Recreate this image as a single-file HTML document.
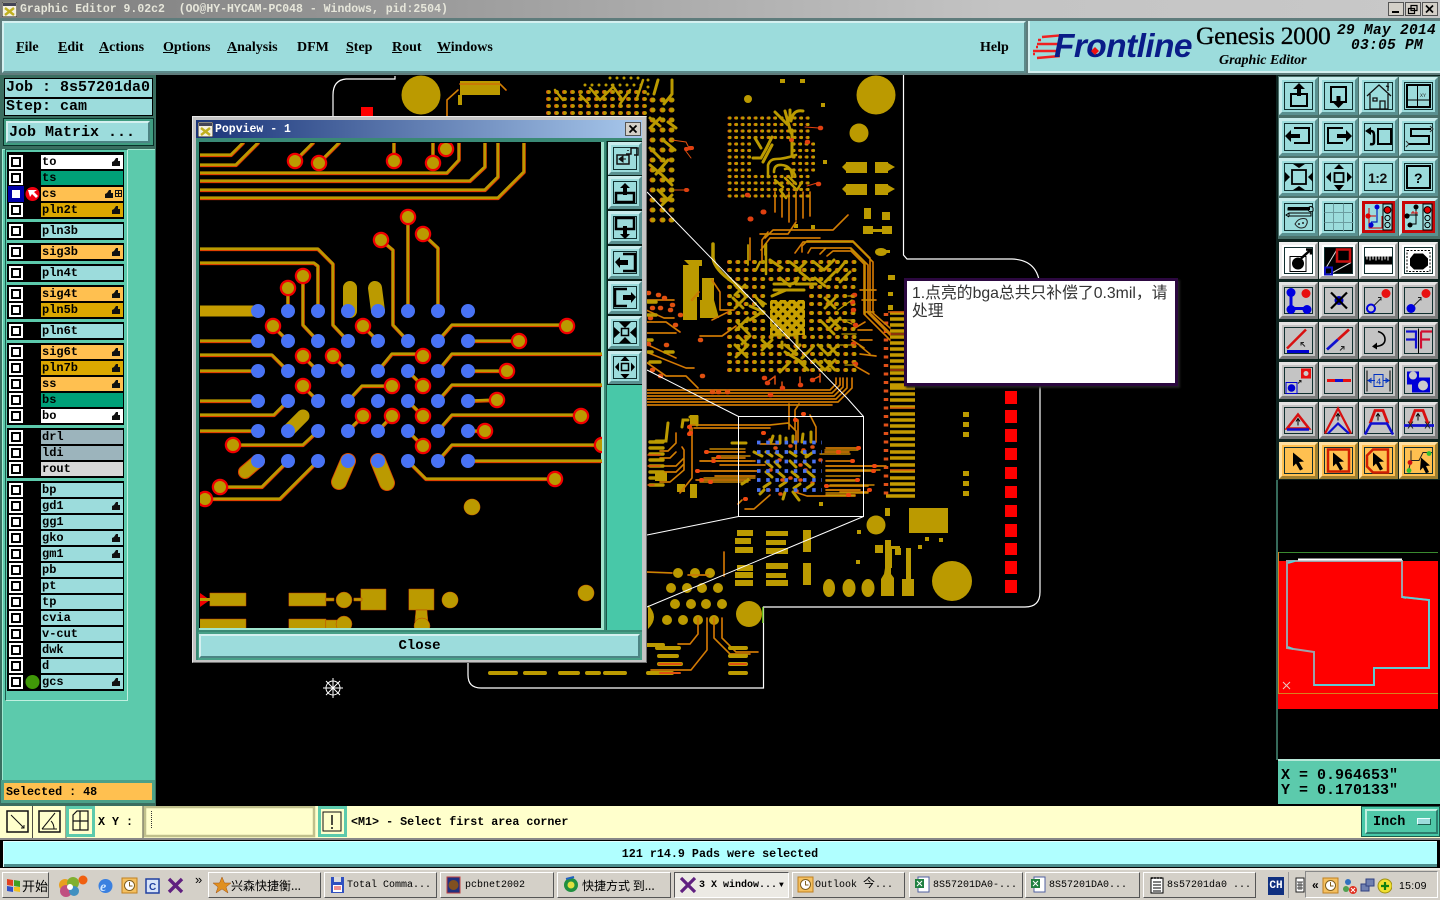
<!DOCTYPE html>
<html><head><meta charset="utf-8"><title>Graphic Editor</title>
<style>
html,body{margin:0;padding:0;width:1440px;height:900px;overflow:hidden;background:#000}
div,span,svg{position:absolute;box-sizing:border-box}
body{font-family:"Liberation Mono","Noto Sans CJK SC",monospace;color:#000}
.m{font:bold 14px "Liberation Serif",serif;top:40px}
u{text-decoration:underline}
.mono{font:bold 15px/18px "Liberation Mono",monospace;white-space:pre}
.lg{background:#000}
.l{left:41px;width:82px;height:14px;font:bold 12px/15px "Liberation Mono",monospace;padding-left:1px;background:#9cdcdc}
.w{background:#fff}.t{background:#00a078}.o{background:#ffc050}.y{background:#dca800}.s{background:#9cb4bc}.v{background:#d8d8d8}
.c{left:9px;width:14px;height:14px;background:#fff}
.c:after{content:"";position:absolute;left:2px;top:2px;width:10px;height:10px;border:2px solid #000;background:#fff;box-sizing:border-box}
.b{width:39px;height:38px;background:#9cdcdc;border:3px solid;border-color:#c8ecec #5a9090 #5a9090 #c8ecec}
.b i{position:absolute;left:2px;top:2px;right:2px;bottom:2px;border:1px solid #103030}
.g1{background:#c4c4c4;border-color:#e4e4e4 #7c7c7c #7c7c7c #e4e4e4}
.wh{background:#fff;border-color:#f0f0f0 #a0a0a0 #a0a0a0 #f0f0f0}
.or{background:#ffc050;border-color:#ffe0a0 #a08030 #a08030 #ffe0a0}
.b svg{left:-3px;top:-3px;width:39px;height:38px}
.pb{left:608px;width:34px;height:33px;background:#9cdcdc;border:3px solid;border-color:#c8ecec #5a9090 #5a9090 #c8ecec}
.pb i{position:absolute;left:2px;top:2px;right:2px;bottom:2px;border:1px solid #103030}
.pb svg{left:-3px;top:-3px;width:34px;height:33px}
.k{top:872px;height:26px;background:#d4d0c8;border:1px solid;border-color:#fff #555 #555 #fff;font:10px/26px "Liberation Mono","Noto Sans CJK SC",monospace;white-space:pre;overflow:hidden}
.k b{position:absolute;top:0;font-weight:normal}
.k svg{left:4px;top:3px;width:18px;height:18px}
.tb{top:877px;width:17px;height:17px}
svg .tr{fill:none;stroke-linejoin:round;stroke-linecap:round}
</style></head><body>

<!-- title bar -->
<div style="left:0;top:0;width:1440px;height:18px;background:linear-gradient(90deg,#7c7c7c,#c4c4c4 70%,#c8c8c8)"></div>
<svg style="left:2px;top:2px;width:15px;height:15px"><rect width="15" height="15" fill="#f4f0e0" stroke="#222"/><rect x="1" y="1" width="13" height="3" fill="#445"/><path d="M3 6l9 7M12 6l-9 7" stroke="#c0b020" stroke-width="2.400"/></svg>
<div style="left:20px;top:3px;font:bold 11.500px/14px 'Liberation Mono',monospace;color:#e6e6da;white-space:pre">Graphic Editor 9.02c2  (OO@HY-HYCAM-PC048 - Windows, pid:2504)</div>
<svg style="left:1388px;top:2px;width:50px;height:14px"><g fill="#d4d0c8" stroke="#555"><rect x=".5" y=".5" width="15" height="13"/><rect x="17.500" y=".5" width="15" height="13"/><rect x="34.500" y=".5" width="15" height="13"/></g><path d="M4 10h7" stroke="#000" stroke-width="2"/><path d="M23 3.500h6v5h-6zM20.500 6.500h6v5h-6z" fill="#d4d0c8" stroke="#000" stroke-width="1.200"/><path d="M38 3.500l7 7M45 3.500l-7 7" stroke="#000" stroke-width="1.700"/></svg>
<div style="left:0;top:18px;width:1440px;height:58px;background:#5f7c7c"></div>

<!-- menu bar -->
<div style="left:2px;top:21px;width:1024px;height:52px;background:#9cdcdc;border:2px solid;border-color:#d4f0f0 #5c8a8a #5c8a8a #d4f0f0"></div>
<span class="m" style="left:16px"><u>F</u>ile</span><span class="m" style="left:58px"><u>E</u>dit</span><span class="m" style="left:99px"><u>A</u>ctions</span><span class="m" style="left:163px"><u>O</u>ptions</span><span class="m" style="left:227px"><u>A</u>nalysis</span><span class="m" style="left:297px">DFM</span><span class="m" style="left:346px"><u>S</u>tep</span><span class="m" style="left:392px"><u>R</u>out</span><span class="m" style="left:437px"><u>W</u>indows</span><span class="m" style="left:980px">Help</span>

<!-- logo header -->
<div style="left:1028px;top:21px;width:412px;height:52px;background:#9cdcdc;border-left:2px solid #d4f0f0;border-bottom:2px solid #d4f0f0"></div>
<svg style="left:1030px;top:31px;width:30px;height:32px"><path d="M12 6l23-2M7 13h23M3 20h23M7 27l23-2M11 9l-3 0M8 16h-2M5 23h-2" stroke="#f02020" stroke-width="2.400"/></svg>
<div style="left:1054px;top:28px;font:italic bold 33.500px/38px 'Liberation Sans',sans-serif;color:#0a1c88;letter-spacing:-.6px;white-space:pre">Frontline</div>
<svg style="left:1089px;top:45px;width:12px;height:12px"><path d="M6 2l4 4-4 4-4-4z" fill="#f01010"/></svg>
<div style="left:1196px;top:21px;font:25.500px/30px 'Liberation Serif',serif;white-space:pre;-webkit-text-stroke:.3px #000;letter-spacing:-.3px">Genesis 2000</div>
<div style="left:1219px;top:53px;font:italic bold 14px/16px 'Liberation Serif',serif;white-space:pre">Graphic Editor</div>
<div style="left:1337px;top:24px;font:italic bold 14.500px/15px 'Liberation Mono',monospace;white-space:pre;letter-spacing:.300px">29 May 2014</div>
<div style="left:1351px;top:39px;font:italic bold 14.500px/15px 'Liberation Mono',monospace;white-space:pre;letter-spacing:.300px">03:05 PM</div>

<!-- main canvas -->
<div style="left:155px;top:75px;width:1123px;height:731px;background:#000"></div>
<svg style="left:0;top:0;width:1440px;height:806px" viewBox="0 0 1440 806">
<defs>
<pattern id="hx" width="6.400" height="6.400" patternUnits="userSpaceOnUse" patternTransform="rotate(45)"><rect width="6.400" height="6.400" fill="#c8a000"/><rect x="0" y="0" width="2.400" height="2.400" fill="#000"/></pattern>
<g id="mt">
<path d="M447 116V100L458 90M460 84H500M500 84l6 6"/>
<path d="M795 253l8-11h50l20 20v51l17 15M802 252v-6l5-5h46l17 17v55l20 20M808 253l3-5h40l17 17v48l22 22M820 254l6-6h24l15 15v52l25 25M827 256l6-5h18l13 13v50l26 26"/>
<path d="M647 390H830l6-6v-6M647 393H832l8-8v-7M647 396H834l9-9v-9M647 399H836l11-11v-10M647 402H838l14-14v-10M647 405H832"/>
<path d="M765 238l8-8h60l15-15M761 250l9-12h50M750 260v-22M762 262v-22l6-8"/>
<path d="M646 300h28M646 310l18 8h10M646 322h20l14 10M646 333h30M646 344l30 14M646 352l40 16h8M646 362l20 14h20l12 12"/>
<path d="M692 300l7-8M712 280l8 12v18h14M712 320l20-10M700 336h22l14-10"/>
<path d="M775 192v20M782 192v25M789 192v30M796 192v28M803 192v26M810 192v24M796 222l-8 12h-28"/>
<path d="M852 340l12 8M855 328l10-6M860 346l10 8"/>
<path d="M690 425H770l18-2 8 8v20M694 428H770M692 428v50l-12 15M789 404v25M795 430v-20l4-6M810 415l6 12v15M798 420v22M760 444h20"/>
<path d="M706 452H745M712 458H745M700 461H755M720 465H765M697 471H760M715 476H755M700 480H750M696 480H745M826 448h32M825 452h24M826 461h24M826 466h60M826 471H872M826 480H855M826 486H868M840 492h28M826 490H860M826 495H855"/>
<path d="M742 500l-4 4M770 495l-16 14H745M795 492l12 4h48"/>
<path d="M660 451H668l8-8v-10M660 458H670l6-6M660 466H676l8-8M660 472h16l8-8M660 482l10 0 14-12v-20l-2-3M690 428v5"/>
<path d="M647 572l25 1M688 575l20 0M724 552v24"/>
<path d="M698 618v16l-8 10h-12M707 618v32l-16 20h-40M714 618l0 20 16 16h20M722 618v20l14 14h22"/>
<path d="M860 290h16M862 300h14M864 312h10M858 330l14 0M860 340l12 0M860 354l16 2M855 366l14 8"/>
</g>
</defs>

<!-- board outline -->
<g fill="none" stroke="#fff" stroke-width="1.200">
<path d="M395 76v3H346Q333 80 333 95V118"/>
<path d="M468 660v15q0 13 13 13H763.500V607H1025Q1040 607 1040 592V290Q1040 260 1012 259H907L903.500 255V75"/>
</g>
<g fill="#bb9a00">
<circle cx="421" cy="95" r="19.500"/><circle cx="876" cy="95" r="19.500"/><circle cx="859" cy="133" r="9.500"/><circle cx="748" cy="99" r="4"/><circle cx="876" cy="525" r="9.500"/><circle cx="952" cy="581" r="20"/><circle cx="749" cy="614" r="13"/>
<rect x="909" y="508" width="39" height="25"/>
<rect x="460" y="81" width="40" height="14"/><rect x="458" y="95" width="4" height="10"/>
<rect x="846" y="162" width="21" height="11"/><rect x="875" y="162" width="13" height="11"/><rect x="846" y="184" width="21" height="11"/><rect x="875" y="184" width="13" height="11"/>
<path d="M846 163l-4 4 4 4zM888 163l7 4-7 4zM846 185l-4 4 4 4zM888 185l7 4-7 4z"/>
<rect x="863" y="226" width="10" height="8"/><rect x="882" y="226" width="10" height="8"/><rect x="872" y="229" width="12" height="3"/>
<rect x="864" y="208" width="7" height="11"/><rect x="882" y="212" width="8" height="8"/>
<ellipse cx="881" cy="252" rx="6" ry="4"/><rect x="884" y="250" width="6" height="3"/>
<rect x="683" y="265" width="16" height="32"/><rect x="683" y="296" width="14" height="24"/><rect x="702" y="278" width="12" height="40"/><path d="M684 260h18v6h-12z"/><path d="M700 300h14l5 18h-19z"/>
<ellipse cx="829" cy="588" rx="6" ry="9"/><ellipse cx="849" cy="588" rx="6.500" ry="9"/><ellipse cx="868" cy="588" rx="6.500" ry="9"/>
<path d="M886 562h5v12l3 4v18h-13v-17l3-5z"/><rect x="902" y="579" width="12" height="17"/><rect x="906" y="562" width="5" height="17"/>
<path d="M885 562h7v6h-7zM885 548h7v14h-7zM906 548h5v14h-5z"/>
<g id="cp"><circle cx="678" cy="573" r="5"/><circle cx="695" cy="573" r="5"/><circle cx="710" cy="573" r="5"/><circle cx="671" cy="588" r="5"/><circle cx="687" cy="588" r="5"/><circle cx="702" cy="588" r="5"/><circle cx="718" cy="588" r="5"/><circle cx="675" cy="604" r="5"/><circle cx="691" cy="604" r="5"/><circle cx="706" cy="604" r="5"/><circle cx="722" cy="604" r="5"/><circle cx="667" cy="620" r="5"/><circle cx="683" cy="620" r="5"/><circle cx="698" cy="620" r="5"/><circle cx="714" cy="620" r="5"/></g>
<path d="M648 605q12 12 0 24z"/>
<rect x="737" y="530" width="16" height="6"/><rect x="735" y="538" width="16" height="6"/><rect x="735" y="547" width="18" height="6"/><rect x="737" y="565" width="16" height="6"/><rect x="735" y="572" width="18" height="6"/><rect x="735" y="580" width="18" height="6"/>
<rect x="766" y="531" width="22" height="5"/><rect x="766" y="540" width="20" height="5"/><rect x="766" y="548" width="22" height="6"/><rect x="766" y="563" width="22" height="6"/><rect x="766" y="573" width="20" height="5"/><rect x="766" y="580" width="22" height="6"/>
<rect x="803" y="530" width="8" height="22"/><rect x="803" y="563" width="8" height="22"/>
<rect x="885" y="508" width="5" height="8"/><rect x="885" y="540" width="6" height="8"/><rect x="885" y="546" width="15" height="3"/><rect x="895" y="548" width="6" height="7"/><rect x="875" y="545" width="8" height="8"/>
<rect x="925" y="537" width="4" height="4"/><rect x="939" y="538" width="4" height="4"/><rect x="918" y="545" width="4" height="4"/>
<rect x="857" y="530" width="4" height="4"/><rect x="856" y="560" width="4" height="4"/>
<rect x="963" y="412" width="6" height="5"/><rect x="963" y="422" width="6" height="5"/><rect x="963" y="432" width="6" height="5"/><rect x="963" y="471" width="6" height="5"/><rect x="963" y="481" width="6" height="5"/><rect x="963" y="491" width="6" height="5"/>
<rect x="655" y="472" width="12" height="9"/><rect x="690" y="415" width="8" height="10"/><rect x="690" y="484" width="7" height="14"/><rect x="677" y="484" width="8" height="8"/>
<rect x="888" y="275" width="7" height="5"/><rect x="888" y="292" width="5" height="4"/><rect x="888" y="305" width="5" height="5"/>
<rect x="821" y="103" width="4" height="4"/><rect x="823" y="160" width="4" height="4"/>
<rect x="794" y="224" width="4" height="4"/><rect x="811" y="225" width="4" height="4"/>
<rect x="780" y="79" width="5" height="4"/><rect x="800" y="79" width="5" height="4"/>
</g>
<g fill="#f00">
<rect x="1005" y="391" width="12" height="13"/><rect x="1005" y="410" width="12" height="13"/><rect x="1005" y="429" width="12" height="13"/><rect x="1005" y="448" width="12" height="12"/><rect x="1005" y="467" width="12" height="12"/><rect x="1005" y="486" width="12" height="12"/><rect x="1005" y="505" width="12" height="12"/><rect x="1005" y="524" width="12" height="13"/><rect x="1005" y="543" width="12" height="12"/><rect x="1005" y="561" width="12" height="13"/><rect x="1005" y="580" width="12" height="13"/>
<rect x="361" y="107" width="12" height="9"/>
</g>
<rect x="762" y="607" width="1.500" height="16" fill="#60b010"/>

<!-- comb connector -->
<path d="M890 313H904M890 319H904M890 325H904M890 331H904M890 337H904M890 343H904M890 349H904M890 355H904M890 361H904M890 367H904M890 373H904M890 379H904M890 385H904" stroke="#c49a00" stroke-width="3.500"/>
<path d="M890 388H915M890 394H915M890 400H915M890 407H915M890 414H915M890 420H915M890 426H915M890 432H915M890 439H915M890 445H915M890 452H915M890 458H915M890 465H915M890 471H915M890 478H915M890 484H915M890 490H915M886 496H915" stroke="#c49a00" stroke-width="3.600"/>
<path d="M886 313v185" stroke="#e05018" stroke-width="4.500" stroke-dasharray="3 5.500"/>
<path d="M888 312h16M890 334H904M890 370H904M890 408H915M890 470H915" stroke="#e05010" stroke-width="1.300"/>

<!-- traces -->
<g class="tr" stroke="#e04808" stroke-width="1.700"><use href="#mt"/></g>
<g class="tr" stroke="#bb9a00" stroke-width=".9"><use href="#mt"/></g>

<g fill="none" stroke-linecap="round">
<path d="M548 92h100M548 99h100M548 106h100M548 113h100" stroke="#d05010" stroke-width="4" stroke-dasharray="0 8"/>
<path d="M549 92h100M549 99h100M549 106h100M549 113h100" stroke="#bb9a00" stroke-width="3.800" stroke-dasharray="0 8"/>
<path d="M585 85h60M610 78h30M648 80V95" stroke="#bb9a00" stroke-width="3" stroke-dasharray="0 7"/>
<path d="M555 90l8 10M580 95l8 8M590 88l10 12M612 85l10 14M600 100l12 -12M630 90l-10 14M643 80l-6 18" stroke="#bb9a00" stroke-width="2.500"/>

<path d="M652 100V225M662 100V225M671 100V225" stroke="#e05010" stroke-width="5" stroke-dasharray="0 10"/>
<path d="M653 100V225M663 100V225M672 100V225" stroke="#bb9a00" stroke-width="5" stroke-dasharray="0 10"/>
<path d="M650 118l10 8M660 118l-10 10M668 122l8 6M650 148l10 10M663 140l12 10M668 160l-12 14M650 165l12 10M662 175l10 10M658 190l10 10M672 195l-10 10M658 80l-4 14M672 80v14l-8 10" stroke="#bb9a00" stroke-width="3"/>
<path d="M672 140l14 2 4 8M685 150l6 8M675 190h14" stroke="#e05010" stroke-width="1"/>
<path d="M686 149h1M690 148h1M686 190h1M691 148h1" stroke="#e04010" stroke-width="4"/>

<g stroke="#e05010" stroke-width="3" stroke-dasharray="0 6.500">
<path d="M729 118h84M729 124.500h84M729 131h84M729 137.500h84M729 144h20M729 150.500h20M729 157h20M729 163.500h20M729 170h20M729 176.500h84M729 183h84M729 189.500h84M729 196h84M793 144h20M793 150.500h20M793 157h20M793 163.500h20M793 170h20"/></g>
<g stroke="#bb9a00" stroke-width="3.200" stroke-dasharray="0 6.500">
<path d="M730 118h84M730 124.500h84M730 131h84M730 137.500h84M730 144h20M730 150.500h20M730 157h20M730 163.500h20M730 170h20M730 176.500h84M730 183h84M730 189.500h84M730 196h84M794 144h20M794 150.500h20M794 157h20M794 163.500h20M794 170h20"/></g>
<g stroke="#bb9a00">
<path d="M755 138l6 10M772 137l-6 12-5 9h-8M772 145l-9 17" stroke-width="3"/>
<path d="M775 112l12 12M785 111l6 22M790 110v10M803 111q-10-2-12 10M792 130v25" stroke-width="3"/>
<path d="M796 155q-12 4-20 4-6 0-8 6v12M774 172q0-8 8-7 10 1 10 12M795 175q-4-8-10-6" stroke-width="2.600"/>
<path d="M775 180l8 7M785 178l12 12M790 178l6 6M780 190l6 8M802 182l-5 8" stroke-width="2.500"/>
</g>
<path d="M820 128h1M818 184h1M807 142h1M747 195h1" stroke="#e04010" stroke-width="4.500"/>
<path d="M805 127l14 1M807 186l10-3" stroke="#e04010" stroke-width="1"/>
<path d="M791 140h1" stroke="#e05010" stroke-width="4"/>
<path d="M750 219h1M763 212h1" stroke="#e04010" stroke-width="5"/>

<g stroke="#e05010" stroke-width="4" stroke-dasharray="0 8.300">
<path d="M729 262h125M729 270h125M729 279h125M729 287h35M729 296h35M729 304h35M729 313h35M729 321h35M729 329h35M729 337h125M729 346h125M729 354h125M729 362h125M729 370h125M811 287h42M811 296h42M811 304h42M811 313h42M811 321h42M811 329h42"/></g>
<g stroke="#bb9a00" stroke-width="4" stroke-dasharray="0 8.300">
<path d="M730 262h125M730 270h125M730 279h125M730 287h35M730 296h35M730 304h35M730 313h35M730 321h35M730 329h35M730 337h125M730 346h125M730 354h125M730 362h125M730 370h125M812 287h42M812 296h42M812 304h42M812 313h42M812 321h42M812 329h42"/></g>
<g stroke="#bb9a00" stroke-width="3">
<path d="M735 285l10 10M745 285l-10 10M733 298l10 10M745 298l-10 10M737 322l12 12M748 318l-12 12M738 336l8 8M750 336l-8 8M762 340l8 8M772 340l-10 10M735 345l12 12M748 345l-12 12"/>
<path d="M825 308l10-10M825 298l10 10M830 318l10 10M840 318l-10 10M822 322l12 12M818 345l10 10M828 345l10 10M838 345l-10 10M835 360l-10 10M825 360l10 10M815 360l10 10"/>
<path d="M770 260l12 8M790 262l10 8M806 262l-8 8M814 262l10 8M834 260l-10 10M845 262l-8 10M780 278l10 8M800 272l10 8M815 278l10 8M835 272l-10 10M850 272l-10 10"/>
<path d="M774 284h16q6 0 8-6M774 290h30M796 284h20M772 296l14-6M785 345l10 8M800 345l-8 10M785 352l20 12M790 362l-10 10M812 348l-10 10M798 360l10 10"/>
<path d="M773 335h24v10M782 342v6"/>
<path d="M750 320l12-8M755 296l8 10M750 306l14 6"/>
</g>
<path d="M760 262l-4 8M766 244v30" stroke="#bb9a00" stroke-width="2.500"/>
<path d="M713 244v14q2 12 20 24l8 6" stroke="#bb9a00" stroke-width="3.500"/>
<path d="M765 245v10M748 245v20M760 300l6 4" stroke="#bb9a00" stroke-width="1.800"/>
<rect x="770" y="300" width="35" height="35" fill="url(#hx)"/>
<path d="M854 295h1M853 310h1M855 325h1M853 344h1M855 364h1M852 302h1" stroke="#e04010" stroke-width="4.500"/>
<path d="M848 296l6 0M838 310l14-10M838 320l14 0M838 318l14 6M840 345l14 0M845 365l10 0M842 334l14 0" stroke="#bb9a00" stroke-width="1.300"/>

<path d="M648 293h1M658 295h1M664 298h1M660 308h1M652 308h1M650 318h1M670 310h1M675 325h1M672 305h1M680 315h1M648 344h1M652 370h1M660 376h1M666 345h1M700 340h1M702 376h1M712 392h1M718 392h1M727 392h1" stroke="#e05010" stroke-width="4.500"/>
<path d="M648 302h8M648 315h8M648 340h4M648 352h4M650 362h10M665 352h8" stroke="#bb9a00" stroke-width="3.500"/>

<path d="M766 383l8-6M782 388l0-6M800 385l0-8M812 380l8-4M775 376l0 8M820 374l0 8" stroke="#e05010" stroke-width="1.500"/>
<path d="M767 383h1M782 388h1M800 385h1M812 380h1M764 378h1M770 395h1" stroke="#e04010" stroke-width="4.500"/>

<g stroke="#e06008" stroke-width="1.400"><path d="M710 449H745M718 456H750M700 461H752M712 471H755M700 482H748M704 478H755M820 454H850M825 450H858M826 470H880M826 466H878M826 476H860M826 481H856M826 493H868M830 485H874M826 490H860"/></g>
<g stroke="#bb9a00" stroke-width="1"><path d="M710 449H745M718 456H750M700 461H752M712 471H755M700 482H748M704 478H755M820 454H850M825 450H858M826 470H880M826 466H878M826 476H860M826 481H856M826 493H868M830 485H874M826 490H860"/></g>
<path d="M706 452h1M718 457h1M713 461h1M697 471h1M710 482h1M701 480h1M858 448h1M838 452h1M852 461h1M874 466h1M873 471h1M857 480h1M826 486h1M869 490h1M848 495h1M689 427h1M689 434h1M690 433h1M763 433h1M803 414h1M795 420h1M745 499h1" stroke="#f04810" stroke-width="4"/>
<path d="M770 440h1M775 448h1M779 460h1M790 446h1M803 450h1M812 447h1M820 460h1M800 465h1M805 470h1M770 470h1M782 480h1M790 478h1M800 480h1M812 483h1M768 490h1M780 494h1M796 491h1" stroke="#e05010" stroke-width="3.500"/>
<path d="M773 436l-2 6M780 436v7M786 438v5M793 436v6M803 434l-1 8M811 432v10M754 452l8 4M766 452l6 4M776 453l6 4M790 452l6 4M802 452l6 4M812 453l-6 4M766 462l6 5M775 462l5 5M790 461l6 6M804 462l6 5M766 472l6 5M778 472l6 5M792 472l6 5M808 472l6 5M748 480l-6 4M770 483l-6 4M786 482l-6 4M800 484l-6 4M813 484l-6 4M760 494l4-4M785 492l-2 7M793 492l6 8" stroke="#bb9a00" stroke-width="3"/>
<path d="M757 442.500h65M757 452h65M757 461.500h65M757 471h65M757 480h65M757 490h65" stroke="#4a72f0" stroke-width="3.800" stroke-dasharray="3.500 5.700" stroke-linecap="butt"/>
<path d="M732 443h14" stroke="#bb9a00" stroke-width="3"/>
<rect x="819" y="502" width="4" height="4" fill="#bb9a00" stroke="none"/>

<path d="M650 442h13M650 448h13M650 454h13M650 460h13M650 466h13M650 472h13M650 478h13M650 485h13" stroke="#bb9a00" stroke-width="3.400"/>
<path d="M648 455h12M648 466h12M648 485h6" stroke="#e05010" stroke-width="1.400"/>
<path d="M688 420h-5l-1 7M690 417h7v8M656 441h10l2-18" stroke="#bb9a00" stroke-width="3"/>
<path d="M657 648h22M659 656h18M659 664h22M648 673h24M730 648h16M730 656h16M730 664h16M730 673h16M490 673h26M525 673h20M560 673h18M587 673h12M605 673h20M645 645h18" stroke="#bb9a00" stroke-width="4"/>
<path d="M659 664h22M660 673h20M730 664h16" stroke="#e05010" stroke-width="2"/>
</g>

<g fill="none" stroke="#fff" stroke-width="1">
<rect x="738.500" y="416.500" width="125" height="100"/>
<path d="M647 192L847 398 863.500 416.500M647 370L738.500 416.500M738.500 516.500L647 535M863.500 516.500L647 607"/>
</g>
<g stroke="#fff" fill="none" stroke-width="1"><circle cx="333" cy="688" r="7"/><path d="M333 678v20M323 688h20M326 681l14 14M340 681l-14 14"/></g>
</svg>

<!-- left panel -->
<div style="left:0;top:75px;width:156px;height:731px;background:#3a6e60"></div>
<div style="left:4px;top:78px;width:149px;height:20px;background:#9cdcdc;border:1px solid #000"></div>
<div class="mono" style="left:6px;top:79px">Job : 8s57201da0</div>
<div style="left:4px;top:98px;width:149px;height:18px;background:#9cdcdc;border:1px solid #000"></div>
<div class="mono" style="left:6px;top:98px">Step: cam</div>
<div style="left:3px;top:118px;width:151px;height:28px;background:#3f9c80;border:1px solid #083028"></div>
<div style="left:6px;top:121px;width:144px;height:22px;background:#9cdcdc;border:2px solid;border-color:#d4f0f0 #4c8484 #4c8484 #d4f0f0"></div>
<div class="mono" style="left:9px;top:124px">Job Matrix ...</div>
<div style="left:2px;top:149px;width:153px;height:631px;background:#5ccaac;border-top:1px solid #a0e8d0;border-left:1px solid #a0e8d0"></div>
<div style="left:5px;top:149px;width:123px;height:552px;background:#5ccaac;border:1px solid #1d5c4c;border-bottom-color:#c0f0e0;border-right-color:#c0f0e0"></div>

<div class="lg" style="left:7px;top:152px;width:117px;height:67px"></div>
<div class="lg" style="left:7px;top:222px;width:117px;height:18px"></div>
<div class="lg" style="left:7px;top:243px;width:117px;height:18px"></div>
<div class="lg" style="left:7px;top:264px;width:117px;height:18px"></div>
<div class="lg" style="left:7px;top:285px;width:117px;height:34px"></div>
<div class="lg" style="left:7px;top:322px;width:117px;height:18px"></div>
<div class="lg" style="left:7px;top:343px;width:117px;height:82px"></div>
<div class="lg" style="left:7px;top:428px;width:117px;height:50px"></div>
<div class="lg" style="left:7px;top:481px;width:117px;height:210px"></div>

<div class="c" style="top:155px"></div><div class="l w" style="top:155px">to</div>
<div class="c" style="top:171px"></div><div class="l t" style="top:171px">ts</div>
<div style="left:8px;top:186px;width:16px;height:16px;background:#0000a8"></div><div style="left:12px;top:190px;width:8px;height:8px;background:#fff"></div><div class="l o" style="top:187px">cs</div>
<div class="c" style="top:203px"></div><div class="l y" style="top:203px">pln2t</div>
<div class="c" style="top:224px"></div><div class="l" style="top:224px">pln3b</div>
<div class="c" style="top:245px"></div><div class="l o" style="top:245px">sig3b</div>
<div class="c" style="top:266px"></div><div class="l" style="top:266px">pln4t</div>
<div class="c" style="top:287px"></div><div class="l o" style="top:287px">sig4t</div>
<div class="c" style="top:303px"></div><div class="l y" style="top:303px">pln5b</div>
<div class="c" style="top:324px"></div><div class="l" style="top:324px">pln6t</div>
<div class="c" style="top:345px"></div><div class="l o" style="top:345px">sig6t</div>
<div class="c" style="top:361px"></div><div class="l y" style="top:361px">pln7b</div>
<div class="c" style="top:377px"></div><div class="l o" style="top:377px">ss</div>
<div class="c" style="top:393px"></div><div class="l t" style="top:393px">bs</div>
<div class="c" style="top:409px"></div><div class="l w" style="top:409px">bo</div>
<div class="c" style="top:430px"></div><div class="l s" style="top:430px">drl</div>
<div class="c" style="top:446px"></div><div class="l s" style="top:446px">ldi</div>
<div class="c" style="top:462px"></div><div class="l v" style="top:462px">rout</div>
<div class="c" style="top:483px"></div><div class="l" style="top:483px">bp</div>
<div class="c" style="top:499px"></div><div class="l" style="top:499px">gd1</div>
<div class="c" style="top:515px"></div><div class="l" style="top:515px">gg1</div>
<div class="c" style="top:531px"></div><div class="l" style="top:531px">gko</div>
<div class="c" style="top:547px"></div><div class="l" style="top:547px">gm1</div>
<div class="c" style="top:563px"></div><div class="l" style="top:563px">pb</div>
<div class="c" style="top:579px"></div><div class="l" style="top:579px">pt</div>
<div class="c" style="top:595px"></div><div class="l" style="top:595px">tp</div>
<div class="c" style="top:611px"></div><div class="l" style="top:611px">cvia</div>
<div class="c" style="top:627px"></div><div class="l" style="top:627px">v-cut</div>
<div class="c" style="top:643px"></div><div class="l" style="top:643px">dwk</div>
<div class="c" style="top:659px"></div><div class="l" style="top:659px">d</div>
<div class="c" style="top:675px"></div><div class="l" style="top:675px">gcs</div>

<svg style="left:0;top:0;width:130px;height:700px">
<defs><path id="hnd" d="M0 8V4l2-1 2-3h2v3l2 0v5z" fill="#111"/></defs>
<use href="#hnd" x="112" y="158"/><use href="#hnd" x="105" y="190"/><use href="#hnd" x="112" y="206"/><use href="#hnd" x="112" y="248"/><use href="#hnd" x="112" y="290"/><use href="#hnd" x="112" y="306"/><use href="#hnd" x="112" y="348"/><use href="#hnd" x="112" y="364"/><use href="#hnd" x="112" y="380"/><use href="#hnd" x="112" y="412"/><use href="#hnd" x="112" y="502"/><use href="#hnd" x="112" y="534"/><use href="#hnd" x="112" y="550"/><use href="#hnd" x="112" y="678"/>
<path d="M115.500 190.500h6v6h-6zM118.500 190.500v6M115.500 193.500h6" fill="none" stroke="#111"/>
<circle cx="32.500" cy="194" r="7" fill="#f00010"/><path d="M28 190l9 0-3 2 4 4-2 2-4-4-2 3z" fill="#fff"/>
<circle cx="32.500" cy="682" r="7" fill="#409808"/>
</svg>

<div style="left:1px;top:780px;width:154px;height:23px;background:#ffc050;border:3px solid #4ca088"></div>
<div style="left:6px;top:785px;font:bold 11.700px/14px 'Liberation Mono',monospace;white-space:pre">Selected : 48</div>

<!-- popup window -->
<div style="left:192px;top:116px;width:455px;height:547px;background:#c4c4c4;border:1px solid;border-color:#e8e8e8 #707070 #707070 #e8e8e8"></div>
<div style="left:196px;top:120px;width:446px;height:18px;background:linear-gradient(90deg,#1a3478,#a8c8ec)"></div>
<svg style="left:198px;top:122px;width:15px;height:15px"><rect width="15" height="15" fill="#f4f0e0" stroke="#222"/><rect x="1" y="1" width="13" height="3" fill="#445"/><path d="M3 6l9 7M12 6l-9 7" stroke="#c0b020" stroke-width="2.400"/></svg>
<div style="left:215px;top:123px;font:bold 11.500px/14px 'Liberation Mono',monospace;color:#fff;white-space:pre">Popview - 1</div>
<svg style="left:625px;top:122px;width:16px;height:14px"><rect x=".5" y=".5" width="15" height="13" fill="#d4d0c8" stroke="#555"/><path d="M4.500 3.500l7 7M11.500 3.500l-7 7" stroke="#000" stroke-width="1.800"/></svg>
<div style="left:196px;top:138px;width:446px;height:522px;background:#3a8a76"></div>
<div style="left:199px;top:142px;width:405px;height:488px;background:#000;border-right:3px solid #a0e4cc;border-bottom:2px solid #a0e4cc"></div>
<svg style="left:0;top:0;width:640px;height:640px" viewBox="0 0 640 640">
<defs>
<clipPath id="pc"><rect x="200" y="143" width="402" height="485"/></clipPath>
<path id="trc" d="M313 143l-18 18M339 143l-20 20M394 143v18M433 143v20M200 155h31l12-12M200 165h36l22-22M200 173H447l12-13v-17M200 181H470l15-14v-24M200 190H485l13-13v-34M200 198H498l26-26v-29M408 217V311M423 234l15 14V311M381 240l12 10v75l15 16M200 249H318l15 15v61l15 16M200 263h114l4 3v45M303 276v49l15 16M288 288v23M273 326l15 15M363 326l15 15M567 325H452l-14 16M519 341H468M200 341h58M200 355h72l16 16M200 371h58M303 356l15 15M333 356l15 15M423 354h-31l-14 17M602 354H452l-14 17M507 371H468M303 386l15 15M392 386h-30l-14 15M423 386l-15-15M602 385H452l-14 16M497 400l-29 1M200 401h58M200 415h74l14-14M363 416l-15 15M392 416l-14 15M423 416l-15-15M581 415H452l-14 16M200 431h58M485 431H468M233 445h70l15-14M423 446l-15-15M602 445H452l-14 16M220 487h42l26-26M205 499h75l38-38M555 479H426l-18-18M468 461H602"/>
<path id="rng" d="M295 161h0M319 163h0M394 161h0M433 163h0M446 149h0M408 217h0M423 234h0M381 240h0M303 276h0M288 288h0M273 326h0M363 326h0M567 326h0M519 341h0M303 356h0M333 356h0M423 356h0M507 371h0M303 386h0M392 386h0M423 386h0M497 400h0M363 416h0M392 416h0M423 416h0M581 416h0M485 431h0M233 445h0M423 446h0M220 487h0M205 499h0M555 479h0M602 445h0"/>
<path id="bg" d="M258 311h0M288 311h0M318 311h0M348 311h0M378 311h0M408 311h0M438 311h0M468 311h0M258 341h0M288 341h0M318 341h0M348 341h0M378 341h0M408 341h0M438 341h0M468 341h0M258 371h0M288 371h0M318 371h0M348 371h0M378 371h0M408 371h0M438 371h0M468 371h0M258 401h0M288 401h0M318 401h0M348 401h0M378 401h0M408 401h0M438 401h0M468 401h0M258 431h0M288 431h0M318 431h0M348 431h0M378 431h0M408 431h0M438 431h0M468 431h0M258 461h0M288 461h0M318 461h0M348 461h0M378 461h0M408 461h0M438 461h0M468 461h0"/>
</defs>
<g clip-path="url(#pc)" fill="none" stroke-linecap="round" stroke-linejoin="round">
<use href="#trc" stroke="#e04000" stroke-width="3.600" transform="translate(0,.3)"/>
<use href="#trc" stroke="#bb9a00" stroke-width="2.600" transform="translate(-.2,-.3)"/>
<path d="M200 311h58" stroke="#c49c00" stroke-width="11" stroke-linecap="butt"/>
<path d="M350 288v23M375 288l3 23" stroke="#bb9a00" stroke-width="14"/>
<path d="M303 416l-15 15" stroke="#bb9a00" stroke-width="13"/>
<path d="M245 472l13-11" stroke="#e04000" stroke-width="14"/><path d="M245 472l13-11" stroke="#bb9a00" stroke-width="12"/>
<path d="M339 482l9-21M387 483l-9-22" stroke="#e04000" stroke-width="16"/><path d="M339 482l9-21M387 483l-9-22" stroke="#bb9a00" stroke-width="14.500"/>
<use href="#rng" stroke="#f00000" stroke-width="16.500"/>
<use href="#rng" stroke="#bb9a00" stroke-width="12"/>
<use href="#bg" stroke="#4872f4" stroke-width="14"/>
<path d="M472 507h0M586 593h0M450 600h0" stroke="#d06000" stroke-width="16.600"/>
<path d="M472 507h0M586 593h0M450 600h0" stroke="#bb9a00" stroke-width="15.600"/>
<g fill="#bb9a00" stroke="#c04000" stroke-width=".5">
<rect x="210" y="593" width="36" height="13"/><rect x="289" y="593" width="37" height="13"/><rect x="361" y="589" width="25" height="21"/><rect x="409" y="589" width="25" height="21"/>
<path d="M326 598h8v3h-8zM354 598h8v3h-8zM416 610h11l1 12h-13z"/>
<circle cx="344" cy="600" r="8"/>
<rect x="200" y="619" width="46" height="12"/><rect x="289" y="619" width="37" height="12"/><rect x="326" y="620" width="20" height="10"/><circle cx="344" cy="624" r="8"/><circle cx="422" cy="626" r="8"/>
</g>
<path d="M200 593l10 7-10 7z" fill="#f00000" stroke="none"/>
<path d="M200 598h12v3h-12z" fill="#bb9a00" stroke="none"/>
</g>
</svg>

<!-- popup toolbar -->
<div style="left:606px;top:141px;width:36px;height:489px;background:#48c8a8;border-left:1px solid #1a5a4a"></div>
<div style="left:607px;top:141px;width:35px;height:244px;background:#081e18"></div>
<div class="pb" style="top:142px"><i></i><svg viewBox="0 0 34 33"><path d="M9 13h12v9H9zM20 9v-1M18 12h5V6h7v7h-4" fill="none" stroke="#111" stroke-width="1.500"/><path d="M11 17l4-3v6zM13 17h5" fill="#111" stroke="#111"/></svg></div>
<div class="pb" style="top:176px"><i></i><svg viewBox="0 0 34 33"><path d="M8 17h18v9H8z" fill="none" stroke="#000" stroke-width="2.500"/><path d="M17 7l5 5h-3v7h-4v-7h-3z" fill="#000"/></svg></div>
<div class="pb" style="top:211px"><i></i><svg viewBox="0 0 34 33"><path d="M8 7h18v11H8z" fill="none" stroke="#000" stroke-width="2.500"/><path d="M17 28l5-5h-3v-8h-4v8h-3z" fill="#000"/></svg></div>
<div class="pb" style="top:246px"><i></i><svg viewBox="0 0 34 33"><path d="M15 8h12v17H15" fill="none" stroke="#000" stroke-width="2.500"/><path d="M7 16l5-5v3h8v5h-8v3z" fill="#000"/></svg></div>
<div class="pb" style="top:281px"><i></i><svg viewBox="0 0 34 33"><path d="M19 8H7v17h12" fill="none" stroke="#000" stroke-width="2.500"/><path d="M28 16l-5-5v3h-8v5h8v3z" fill="#000"/></svg></div>
<div class="pb" style="top:316px"><i></i><svg viewBox="0 0 34 33"><rect x="13.500" y="12.500" width="7" height="7" fill="none" stroke="#000" stroke-width="1.500"/><path d="M11 6h12l-6 6zM11 27h12l-6-6zM6 11v11l6-5.500zM28 11v11l-6-5.500z" fill="#000"/></svg></div>
<div class="pb" style="top:351px"><i></i><svg viewBox="0 0 34 33"><rect x="13.500" y="12.500" width="7" height="7" fill="none" stroke="#000" stroke-width="1.500"/><path d="M12.500 10h9L17 5zM12.500 23h9L17 28zM11 11.500v9L7 16zM23 11.500v9l4-4.500z" fill="#000"/></svg></div>
<div style="left:198px;top:632px;width:444px;height:28px;background:#48a088"></div>
<div style="left:199px;top:634px;width:441px;height:24px;background:#9cdcdc;border:2px solid;border-color:#d4f0f0 #4c8484 #4c8484 #d4f0f0;text-align:center;font:bold 14px/21px 'Liberation Mono',monospace">Close</div>

<!-- tooltip -->
<div style="left:904px;top:278px;width:274px;height:108px;background:#fff;border:3px solid #2c0840;box-shadow:2px 2px 2px #222"></div>
<div style="left:912px;top:285px;width:262px;font:15.800px/18px 'Liberation Sans','Noto Sans CJK SC',sans-serif;color:#333;white-space:pre">1.点亮的bga总共只补偿了0.3mil，请
处理</div>

<!-- right toolbars -->
<div style="left:1276px;top:75px;width:164px;height:405px;background:#0e2420"></div>
<div style="left:1278px;top:76px;width:162px;height:163px;background:#4a706a"></div>
<div style="left:1276px;top:480px;width:2px;height:280px;background:#356a5a"></div>

<div class="b" style="left:1279px;top:77px"><i></i><svg viewBox="0 0 39 38"><path d="M12 17h16v12H12z" fill="none" stroke="#000" stroke-width="2"/><path d="M20 6l6 6h-4v7h-4v-7h-4z" fill="#000"/></svg></div>
<div class="b" style="left:1319px;top:77px"><i></i><svg viewBox="0 0 39 38"><path d="M12 10h15v15H12z" fill="none" stroke="#000" stroke-width="2"/><path d="M19.500 31l6-6h-4v-6h-4v6h-4z" fill="#000"/></svg></div>
<div class="b" style="left:1359px;top:77px"><i></i><svg viewBox="0 0 39 38"><path d="M8 19L20 8l12 11M11 17v15h18V17M14 21h4v3h-4zM21 24h5v8h-5zM29 6v8M27 9l3 1" fill="none" stroke="#111" stroke-width="1.300"/></svg></div>
<div class="b" style="left:1399px;top:77px"><i></i><svg viewBox="0 0 39 38"><rect x="8" y="8" width="23" height="22" fill="none" stroke="#000" stroke-width="2"/><path d="M18.500 9v20M9 23h21" stroke="#000"/><text x="21" y="20" font-size="5" font-family="Liberation Mono,monospace" fill="#222">XY</text></svg></div>

<div class="b" style="left:1279px;top:118px"><i></i><svg viewBox="0 0 39 38"><path d="M15 10h15v15H15" fill="none" stroke="#000" stroke-width="2"/><path d="M6 18l6-6v4h9v4h-9v4z" fill="#000"/></svg></div>
<div class="b" style="left:1319px;top:118px"><i></i><svg viewBox="0 0 39 38"><path d="M24 10H9v15h15" fill="none" stroke="#000" stroke-width="2"/><path d="M33 18l-6-6v4h-9v4h9v4z" fill="#000"/></svg></div>
<div class="b" style="left:1359px;top:118px"><i></i><svg viewBox="0 0 39 38"><rect x="19" y="11" width="13" height="15" fill="none" stroke="#000" stroke-width="2"/><path d="M11 13h1q3 0 3 4v7q0 3-4 2" fill="none" stroke="#000" stroke-width="2.500"/><path d="M6 13l6-4v8z" fill="#000"/></svg></div>
<div class="b" style="left:1399px;top:118px"><i></i><svg viewBox="0 0 39 38"><path d="M32 11H12v7h18v8H9" fill="none" stroke="#000" stroke-width="2"/><path d="M31 8l3 3-3 3M7 23l3 3-3 3" fill="none" stroke="#333"/></svg></div>

<div class="b" style="left:1279px;top:158px"><i></i><svg viewBox="0 0 39 38"><rect x="13" y="12" width="14" height="14" fill="none" stroke="#000" stroke-width="1.800"/><path d="M14 6h12l-6 4zM14 32h12l-6-4zM6 14v10l5-5zM34 14v10l-5-5z" fill="#000"/></svg></div>
<div class="b" style="left:1319px;top:158px"><i></i><svg viewBox="0 0 39 38"><rect x="15.500" y="15" width="9" height="9" fill="none" stroke="#000" stroke-width="1.800"/><path d="M15 11h10l-5-5zM15 27h10l-5 6zM12 14v10l-5-5zM28 14v10l5-5z" fill="#000"/></svg></div>
<div class="b" style="left:1359px;top:158px"><i></i><svg viewBox="0 0 39 38"><text x="9" y="25" font-family="Liberation Sans,sans-serif" font-weight="bold" font-size="14" fill="#111" letter-spacing="-.5">1:2</text></svg></div>
<div class="b" style="left:1399px;top:158px"><i></i><svg viewBox="0 0 39 38"><rect x="8" y="8" width="23" height="22" fill="none" stroke="#000" stroke-width="2"/><text x="15" y="25" font-family="Liberation Sans,sans-serif" font-weight="bold" font-size="14" fill="#000">?</text></svg></div>

<div class="b" style="left:1279px;top:198px"><i></i><svg viewBox="0 0 39 38"><path d="M9 10h20q3-3 5 0v3q-3 2-5-1H9zM10 15h22v3H10zM10 15l-3 2 3 2" fill="#9cdcdc" stroke="#000" stroke-width="1"/><path d="M9 9h22v3H9z" fill="#000"/><path d="M16 26q4-7 11-5 3 3-1 8-6 3-10-3z" fill="none" stroke="#222"/><circle cx="20" cy="26" r="1" fill="#222"/><circle cx="24" cy="25" r="1" fill="#222"/></svg></div>
<div class="b" style="left:1319px;top:198px"><i></i><svg viewBox="0 0 39 38"><path d="M14.500 5.500v28M24.500 5.500v28M5.500 14.500h29M5.500 24.500h29" stroke="#6c9ca0"/></svg></div>
<div class="b" style="left:1359px;top:198px"><i style="border:3px solid #c80808;left:0;top:0;right:0;bottom:0"></i><svg viewBox="0 0 39 38"><path d="M10 10v20h13V18M10 18h7" fill="none" stroke="#d00000"/><path d="M18 10v14H12" fill="none" stroke="#0020c0" stroke-width="1.200"/><circle cx="18" cy="9" r="2.500" fill="#0000d0"/><circle cx="9" cy="18" r="2.600" fill="#e00000"/><circle cx="12" cy="27" r="2.600" fill="#0000d0"/><rect x="24" y="6" width="9" height="26" fill="#9cdcdc" stroke="#000"/><circle cx="28.500" cy="12" r="3.400" fill="#e00000" stroke="#000"/><circle cx="28.500" cy="20" r="2.600" fill="none" stroke="#000"/><circle cx="28.500" cy="27" r="2.600" fill="none" stroke="#000"/></svg></div>
<div class="b" style="left:1399px;top:198px"><i style="border:3px solid #c80808;left:0;top:0;right:0;bottom:0"></i><svg viewBox="0 0 39 38"><path d="M17 9v17h-6M9 17h10" fill="none" stroke="#000"/><circle cx="17" cy="9" r="2.500" fill="#000"/><circle cx="8" cy="18" r="2.600" fill="#000"/><circle cx="11" cy="27" r="2.500" fill="#000"/><path d="M12 15h7M14 13v2M17 13v2" stroke="#d00000"/><rect x="24" y="6" width="9" height="26" fill="#9cdcdc" stroke="#000"/><circle cx="28.500" cy="12" r="3.400" fill="#e00000" stroke="#000"/><circle cx="28.500" cy="20" r="2.600" fill="none" stroke="#000"/><circle cx="28.500" cy="27" r="2.600" fill="none" stroke="#000"/></svg></div>

<!-- white row -->
<div class="b wh" style="left:1279px;top:242px;height:37px"><i></i><svg viewBox="0 0 39 37"><rect x="11" y="14" width="16" height="15" fill="none" stroke="#000"/><circle cx="19" cy="21" r="6" fill="#000"/><path d="M22 16L32 7M27 7h5v5" fill="none" stroke="#000" stroke-width="2.500"/></svg></div>
<div class="b wh" style="left:1319px;top:242px;height:37px"><i style="background:#000"></i><svg viewBox="0 0 39 37"><path d="M6 27L18 7M10 32L32 20" stroke="#ddd"/><rect x="18" y="7" width="13" height="12" fill="none" stroke="#c81010" stroke-width="2.500"/><rect x="6" y="25" width="7" height="7" fill="none" stroke="#1010c0" stroke-width="2"/></svg></div>
<div class="b wh" style="left:1359px;top:242px;height:37px"><i></i><svg viewBox="0 0 39 37"><rect x="6" y="14" width="27" height="8" fill="#000"/><path d="M8 14v3M11 14v4M14 14v3M17 14v4M20 14v3M23 14v4M26 14v3M29 14v4" stroke="#fff"/></svg></div>
<div class="b wh" style="left:1399px;top:242px;height:37px"><i></i><svg viewBox="0 0 39 37"><rect x="8" y="8" width="23" height="21" fill="none" stroke="#000" stroke-dasharray="2 1.500"/><path d="M15 11h9l5 5v7l-5 4h-9l-4-4v-7z" fill="#000"/></svg></div>

<!-- gray rows -->
<div class="b g1" style="left:1279px;top:282px;height:37px"><i></i><svg viewBox="0 0 39 37"><path d="M12 10v16h16" fill="none" stroke="#0000e0" stroke-width="3"/><circle cx="12" cy="10" r="4.500" fill="#0000e0"/><circle cx="12" cy="27" r="4.500" fill="#0000e0"/><circle cx="28" cy="27" r="4.500" fill="#0000e0"/><circle cx="27" cy="11" r="4.500" fill="#e81010"/></svg></div>
<div class="b g1" style="left:1319px;top:282px;height:37px"><i></i><svg viewBox="0 0 39 37"><circle cx="20" cy="18" r="4.500" fill="#0000c0"/><path d="M12 10l16 16M28 10L12 26" stroke="#000" stroke-width="2.200"/></svg></div>
<div class="b g1" style="left:1359px;top:282px;height:37px"><i></i><svg viewBox="0 0 39 37"><circle cx="12" cy="26" r="4" fill="none" stroke="#0000e0" stroke-width="2"/><circle cx="27" cy="11" r="4.500" fill="#e81010"/><path d="M15 23l7-7M19 15h3v3" fill="none" stroke="#222"/></svg></div>
<div class="b g1" style="left:1399px;top:282px;height:37px"><i></i><svg viewBox="0 0 39 37"><circle cx="12" cy="26" r="4.500" fill="#0000e0"/><circle cx="27" cy="11" r="4.500" fill="#e81010"/><path d="M15 23l7-7M19 15h3v3" fill="none" stroke="#222"/></svg></div>

<div class="b g1" style="left:1279px;top:322px;height:37px"><i></i><svg viewBox="0 0 39 37"><path d="M8 26L27 7" stroke="#d81010" stroke-width="2.500"/><path d="M8 29h22" stroke="#0000d0" stroke-width="3"/><path d="M26 24l-4-4M22 23v-3h3" fill="none" stroke="#222"/></svg></div>
<div class="b g1" style="left:1319px;top:322px;height:37px"><i></i><svg viewBox="0 0 39 37"><path d="M8 27l11-10" stroke="#1010d0" stroke-width="2.800"/><path d="M19 17L30 7" stroke="#d81010" stroke-width="2.800"/><path d="M21 28l4-4M22 24h3v3" fill="none" stroke="#222"/></svg></div>
<div class="b g1" style="left:1359px;top:322px;height:37px"><i></i><svg viewBox="0 0 39 37"><path d="M19 9q7 2 7 8 0 6-9 7" fill="none" stroke="#000" stroke-width="1.600"/><path d="M13 24l5-4v7z" fill="#000"/></svg></div>
<div class="b g1" style="left:1399px;top:322px;height:37px"><i></i><svg viewBox="0 0 39 37"><path d="M22 9h11M22 9v17M22 17h9" fill="none" stroke="#d01030" stroke-width="2.200"/><path d="M7 9h10v17M7 17h9" fill="none" stroke="#1010d0" stroke-width="2.200"/><path d="M19.500 6v25" stroke="#000"/></svg></div>

<div class="b g1" style="left:1279px;top:362px;height:37px"><i></i><svg viewBox="0 0 39 37"><rect x="22" y="6" width="10" height="10" fill="#e81010"/><circle cx="27" cy="11" r="2.500" fill="#ccc"/><rect x="7" y="20" width="11" height="11" fill="none" stroke="#0000d0"/><circle cx="12.500" cy="25.500" r="3.800" fill="#0000d0"/><path d="M19 21l3-3M20 18h2v2" fill="none" stroke="#222"/></svg></div>
<div class="b g1" style="left:1319px;top:362px;height:37px"><i></i><svg viewBox="0 0 39 37"><path d="M8 18h8M24 18h8" stroke="#e81010" stroke-width="3"/><path d="M16 18h8" stroke="#1010d0" stroke-width="3"/></svg></div>
<div class="b g1" style="left:1359px;top:362px;height:37px"><i></i><svg viewBox="0 0 39 37"><path d="M8 8v21M31 8v21" stroke="#000"/><path d="M9 18h7M24 18h6M9 18l3-2v4zM30 18l-3-2v4z" fill="none" stroke="#0030c0"/><rect x="15" y="12" width="9" height="12" fill="none" stroke="#0030c0"/><text x="17" y="22" font-size="9" font-family="Liberation Mono,monospace" fill="#0030c0">4</text></svg></div>
<div class="b g1" style="left:1399px;top:362px;height:37px"><i></i><svg viewBox="0 0 39 37"><path d="M8 9h12v6h11v15H13v-8H8z" fill="#0000d8"/><circle cx="14" cy="13" r="4" fill="#ccc"/><circle cx="24" cy="23" r="5" fill="#ccc"/></svg></div>

<div class="b g1" style="left:1279px;top:402px;height:37px"><i></i><svg viewBox="0 0 39 37"><path d="M8 26l11-14 11 14z" fill="none" stroke="#d81010" stroke-width="2.500"/><path d="M8 27h22" stroke="#1010d0" stroke-width="2.500"/><path d="M19 23v-6M17 19l2-3 2 3" fill="none" stroke="#000"/></svg></div>
<div class="b g1" style="left:1319px;top:402px;height:37px"><i></i><svg viewBox="0 0 39 37"><path d="M6 31L19 6l13 25" fill="none" stroke="#d81010" stroke-width="2.200"/><path d="M9 31l10-10 11 10" fill="none" stroke="#1010d0" stroke-width="2.200"/><path d="M19 18v-6M17 14l2-3 2 3" fill="none" stroke="#000"/></svg></div>
<div class="b g1" style="left:1359px;top:402px;height:37px"><i></i><svg viewBox="0 0 39 37"><path d="M11 21l5-13h8l5 13" fill="none" stroke="#d81010" stroke-width="2.800"/><path d="M6 32l6-11h16l6 11" fill="none" stroke="#1010d0" stroke-width="2.500"/><path d="M19 18v-6M17 14l2-3 2 3" fill="none" stroke="#000"/></svg></div>
<div class="b g1" style="left:1399px;top:402px;height:37px"><i></i><svg viewBox="0 0 39 37"><path d="M11 21l5-13h8l5 13" fill="none" stroke="#d81010" stroke-width="2.800"/><path d="M5 23h30" stroke="#1010d0" stroke-width="2.800"/><path d="M9 19l5 7M14 19l-5 7M26 19l5 7M31 19l-5 7" stroke="#222"/><path d="M19 18v-6M17 14l2-3 2 3" fill="none" stroke="#000"/></svg></div>

<div class="b or" style="left:1279px;top:442px;height:37px"><i></i><svg viewBox="0 0 39 37"><path d="M14 10l11 9-5 .5 4 7-3 1.500-4-7-3 3z" fill="#000"/></svg></div>
<div class="b or" style="left:1319px;top:442px;height:37px"><i></i><svg viewBox="0 0 39 37"><rect x="9" y="7" width="21" height="22" fill="none" stroke="#d02000" stroke-width="2.500"/><path d="M14 10l11 9-5 .5 4 7-3 1.500-4-7-3 3z" fill="#000"/></svg></div>
<div class="b or" style="left:1359px;top:442px;height:37px"><i></i><svg viewBox="0 0 39 37"><path d="M14 7h15v23H14l-6-6V13z" fill="none" stroke="#d02000" stroke-width="2.500"/><path d="M14 10l11 9-5 .5 4 7-3 1.500-4-7-3 3z" fill="#000"/></svg></div>
<div class="b or" style="left:1399px;top:442px;height:37px"><i></i><svg viewBox="0 0 39 37"><path d="M12 8v10l-2 8M12 18h8l4-8h9" fill="none" stroke="#222"/><circle cx="11" cy="20" r="2.400" fill="#d01010"/><circle cx="10" cy="28" r="2.400" fill="#30c030"/><circle cx="30" cy="11" r="2.400" fill="#30c030"/><path d="M22 15l9 8-4 .5 3 6-3 1.500-3-6-3 3z" fill="#000"/></svg></div>

<!-- navigator -->
<svg style="left:1278px;top:480px;width:162px;height:280px" viewBox="1278 480 162 280">
<rect x="1278" y="480" width="162" height="280" fill="#000"/>
<path d="M1278 552.500h160" stroke="#3a8a30"/>
<rect x="1278" y="561" width="160" height="148" fill="#f00"/>
<path d="M1278.500 552v141M1278 693.500h160" stroke="#d88020"/>
<path d="M1295 561h107v36l27 3v68h-55v17h-60v-33l-27-4v-87z" fill="none" stroke="#a0a0a8" stroke-width="2"/>
<path d="M1314 685h60v-17h55v-68l-27-3" fill="none" stroke="#58d0d8" stroke-width="1.800"/>
<path d="M1288 563l7-2M1288 647l5 2M1402 597l4 1" stroke="#58d0d8" stroke-width="1.800"/>
<path d="M1298 559.500h104" stroke="#fff" stroke-width="2"/>
<path d="M1283 682l7 7M1290 682l-7 7" stroke="#e8c8c0"/>
</svg>
<div style="left:1278px;top:759px;width:162px;height:45px;background:#5ccaac;border-top:2px solid #b8e8d8"></div>
<div class="mono" style="left:1281px;top:767px;line-height:15px;padding-top:1px">X = 0.964653"
Y = 0.170133"</div>

<!-- bottom input row -->
<div style="left:0;top:806px;width:1440px;height:32px;background:#ffffcc"></div>
<div style="left:0;top:838px;width:1440px;height:2px;background:#888"></div>
<svg style="left:0;top:806px;width:350px;height:32px" viewBox="0 806 350 32">
<path d="M32.500 806v32M66 806v32M143 806v32" stroke="#222" stroke-width=".8"/>
<g fill="none" stroke="#111" stroke-width="1.500"><rect x="7" y="811" width="21" height="21"/><rect x="39" y="811" width="21" height="21"/></g>
<path d="M11 815l13 13M21 828h3v-3" fill="none" stroke="#111"/><path d="M42 829h15M42 829l13-16M54 829q0-5-3-8" fill="none" stroke="#111"/>
<rect x="66" y="806" width="29" height="31" fill="#5ccaac"/><rect x="69" y="809" width="23" height="25" fill="#ffffcc"/><path d="M73 815l4-4h11v19H73zM73 821h15M80 811v19" fill="none" stroke="#111" stroke-width="1.200"/>
<rect x="145" y="807" width="169" height="29" fill="#ffffcc" stroke="#c0c08c" stroke-width="2.500"/><path d="M151.500 811v17" stroke="#333" stroke-dasharray="1 1"/>
<rect x="318" y="806" width="29" height="31" fill="#5ccaac"/><rect x="321" y="809" width="23" height="25" fill="#ffffcc"/><rect x="323" y="812" width="18" height="19" fill="none" stroke="#111"/><path d="M332 815v10M332 827v2" stroke="#111" stroke-width="1.500"/>
</svg>
<div style="left:98px;top:815px;font:bold 11.700px/14px 'Liberation Mono',monospace;white-space:pre">X Y :</div>
<div style="left:351px;top:815px;font:bold 11.700px/14px 'Liberation Mono',monospace;white-space:pre">&lt;M1&gt; - Select first area corner</div>
<div style="left:1361px;top:806px;width:79px;height:31px;background:#48c8a8;border:3px solid #fff0;outline:1px solid #1c5c4c;outline-offset:-1px"></div>
<div style="left:1365px;top:809px;width:73px;height:25px;background:#50c8a8;border:2px solid;border-color:#c0f0e0 #2c7c6c #2c7c6c #c0f0e0"></div>
<div style="left:1373px;top:815px;font:bold 13.500px/15px 'Liberation Mono',monospace">Inch</div>
<div style="left:1417px;top:818px;width:14px;height:7px;background:#9cdcdc;border:1px solid;border-color:#e8ffff #1c5c4c #1c5c4c #e8ffff"></div>

<!-- status -->
<div style="left:2px;top:840px;width:1436px;height:28px;background:#b0ffff;border:1px solid #000;box-shadow:inset 1px 1px 0 #e0ffff,inset 0 -3px 0 #4c8c8c"></div>
<div style="left:0;top:847px;width:1440px;text-align:center;font:bold 11.700px/14px 'Liberation Mono',monospace">121 r14.9 Pads were selected</div>

<!-- taskbar -->
<div style="left:0;top:868px;width:1440px;height:32px;background:#d4d0c8;border-top:2px solid #f2f0ea"></div>
<div class="k" style="left:2px;width:47px;font-size:13px"><svg style="left:3px;top:4px;width:15px;height:16px"><path d="M1 2l6 1v6l-6-1z" fill="#e04020"/><path d="M8 3l6 1v6l-6-1z" fill="#40a020"/><path d="M1 9l6 1v5l-6-1z" fill="#3050c8"/><path d="M8 10l6 0v5l-6-1z" fill="#f0c020"/></svg><b style="left:19px;font-size:13px;font-family:'Noto Sans CJK SC',sans-serif">开始</b></div>
<svg style="left:58px;top:874px;width:30px;height:24px"><circle cx="7" cy="11" r="6" fill="#e8a020"/><circle cx="15" cy="9" r="6" fill="#80b030"/><circle cx="8" cy="17" r="6" fill="#c05080"/><circle cx="16" cy="17" r="5" fill="#4090c0"/><circle cx="25" cy="6" r="4.500" fill="#f06010"/><circle cx="12" cy="13" r="3" fill="#fff"/></svg>
<svg class="tb" style="left:97px"><circle cx="8.500" cy="9" r="7" fill="#3a80e0"/><text x="3" y="14" font-family="Liberation Serif,serif" font-style="italic" font-weight="bold" font-size="14" fill="#cfe6ff">e</text></svg>
<svg class="tb" style="left:121px"><rect x="1" y="1" width="15" height="15" fill="#f4c060" stroke="#c08020"/><circle cx="8.500" cy="8.500" r="5" fill="#fff" stroke="#806020"/><path d="M8.500 5v4h3" fill="none" stroke="#806020"/></svg>
<svg class="tb" style="left:144px"><rect x="2" y="2" width="13" height="14" fill="#d8e4f8" stroke="#2040a0" stroke-width="1.500"/><text x="5" y="13" font-family="Liberation Sans,sans-serif" font-weight="bold" font-size="10" fill="#2040a0">C</text></svg>
<svg class="tb" style="left:167px"><path d="M2 2l13 13M15 2L2 15" stroke="#602080" stroke-width="3.400"/></svg>
<div style="left:195px;top:871px;font:13px/18px 'Liberation Sans',sans-serif">»</div>
<div class="k" style="left:208px;width:113px"><svg><path d="M9 1l2.500 6H18l-5 4 2 6-6-4-6 4 2-6-5-4h6.500z" fill="#e09020" stroke="#a05010" stroke-width=".5"/></svg><b style="left:22px;font-size:12px;font-family:'Noto Sans CJK SC',sans-serif">兴森快捷衡...</b></div>
<div class="k" style="left:324px;width:113px"><svg><rect x="2" y="1" width="13" height="16" fill="#3050c0"/><rect x="5" y="1" width="7" height="5" fill="#ddd"/><rect x="4" y="9" width="9" height="7" fill="#fff"/><path d="M5 11h7M5 13h7" stroke="#e02020"/></svg><b style="left:22px">Total Comma...</b></div>
<div class="k" style="left:440px;width:114px"><svg><rect x="2" y="1" width="13" height="16" fill="#203080" stroke="#c04040"/><circle cx="8.500" cy="9" r="5" fill="#805020"/></svg><b style="left:24px">pcbnet2002</b></div>
<div class="k" style="left:557px;width:114px"><svg><circle cx="9" cy="9" r="7" fill="#209040"/><circle cx="9" cy="9" r="3.500" fill="#e0e040"/><path d="M4 3l8-2" stroke="#2060c0" stroke-width="2"/></svg><b style="left:24px;font-size:12px;font-family:'Noto Sans CJK SC',sans-serif">快捷方式 到...</b></div>
<div class="k" style="left:674px;width:115px;background:#eceae4;border-color:#555 #fff #fff #555"><svg><path d="M2 2l14 14M16 2L2 16" stroke="#602080" stroke-width="3.200"/></svg><b style="left:24px;font-weight:bold">3 X window...</b><b style="left:104px;font-size:8px">▼</b></div>
<div class="k" style="left:792px;width:113px"><svg><rect x="1" y="1" width="15" height="15" fill="#f4c060" stroke="#c08020"/><circle cx="8.500" cy="8.500" r="5" fill="#fff" stroke="#806020"/><path d="M8.500 5v4h3" fill="none" stroke="#806020"/></svg><b style="left:22px">Outlook <span style="position:static;font:12px 'Noto Sans CJK SC',sans-serif">今</span>...</b></div>
<div class="k" style="left:909px;width:114px"><svg><rect x="4" y="1" width="11" height="15" fill="#fff" stroke="#5060a0"/><rect x="1" y="3" width="9" height="9" fill="#208040"/><path d="M3 5l5 5M8 5l-5 5" stroke="#fff"/></svg><b style="left:23px">8S57201DA0-...</b></div>
<div class="k" style="left:1025px;width:115px"><svg><rect x="4" y="1" width="11" height="15" fill="#fff" stroke="#5060a0"/><rect x="1" y="3" width="9" height="9" fill="#208040"/><path d="M3 5l5 5M8 5l-5 5" stroke="#fff"/></svg><b style="left:23px">8S57201DA0...</b></div>
<div class="k" style="left:1143px;width:113px"><svg><rect x="3" y="2" width="12" height="15" fill="#fff" stroke="#000"/><path d="M5 6h8M5 9h8M5 12h8M5 15h8M4 1v2M7 1v2M10 1v2M13 1v2" stroke="#000"/></svg><b style="left:23px">8s57201da0 ...</b></div>
<div style="left:1268px;top:877px;width:16px;height:18px;background:#103080;color:#fff;font:bold 11px/18px 'Liberation Mono',monospace;text-align:center">CH</div>
<div style="left:1288px;top:872px;width:1px;height:26px;background:#999"></div>
<svg style="left:1295px;top:876px;width:10px;height:18px"><rect x="1" y="2" width="8" height="14" fill="#fff" stroke="#222"/><path d="M2 6h6M2 9h6M2 12h6M4 6v8M6 6v8" stroke="#444"/></svg>
<div style="left:1305px;top:871px;width:133px;height:27px;background:#d4d0c8;border:1px solid;border-color:#888 #fff #fff #888"></div>
<div style="left:1312px;top:877px;font:bold 12px/16px 'Liberation Sans',sans-serif">«</div>
<svg style="left:1322px;top:877px;width:70px;height:18px"><rect x="1" y="1" width="15" height="15" fill="#f4c060" stroke="#c08020"/><circle cx="8.500" cy="8.500" r="5" fill="#fff" stroke="#806020"/><path d="M8.500 5v4h3" fill="none" stroke="#806020"/>
<circle cx="26" cy="5" r="3" fill="#3070c0"/><circle cx="24" cy="12" r="3" fill="#50a050"/><circle cx="31" cy="13" r="4" fill="#e03020"/><path d="M29 11l4 4M33 11l-4 4" stroke="#fff"/>
<rect x="39" y="7" width="8" height="7" fill="#7080b0" stroke="#304080"/><rect x="44" y="2" width="8" height="7" fill="#7080b0" stroke="#304080"/>
<circle cx="63" cy="9" r="7" fill="#f0e030" stroke="#a09010"/><path d="M63 5v8M59 9h8" stroke="#108010" stroke-width="2.200"/></svg>
<div style="left:1399px;top:879px;font:10.500px/14px 'Liberation Sans',sans-serif;white-space:pre;letter-spacing:.3px">15:09</div>
</body></html>
